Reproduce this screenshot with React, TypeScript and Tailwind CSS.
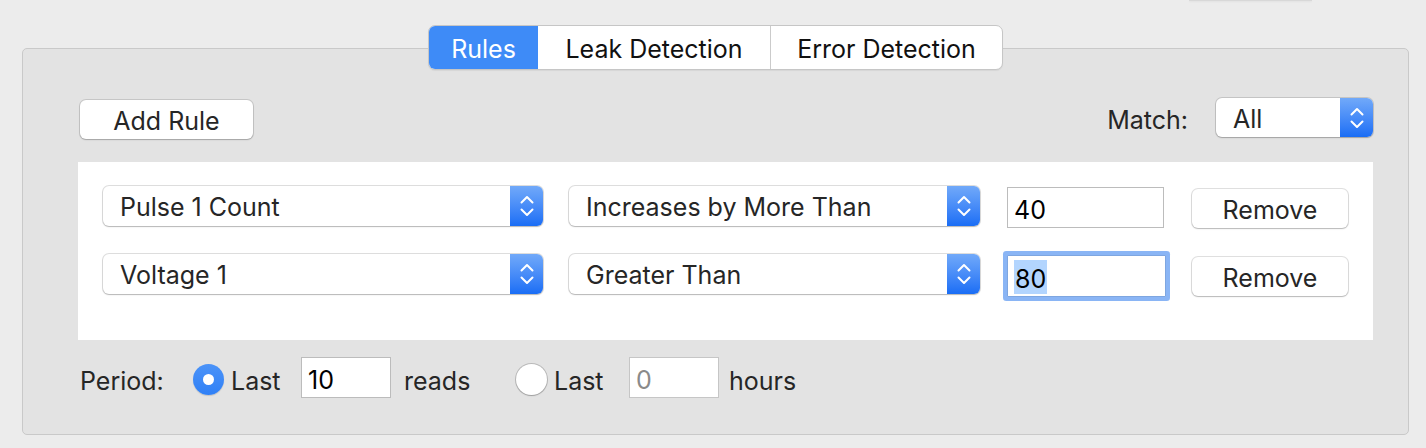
import React from "react";

function Chevrons() {
  return (
    <svg width="14" height="22" viewBox="0 0 14 22" fill="none">
      <path d="M1.5 7.5 L7 2 L12.5 7.5" stroke="white" strokeWidth="2" strokeLinecap="round" strokeLinejoin="round" />
      <path d="M1.5 14.5 L7 20 L12.5 14.5" stroke="white" strokeWidth="2" strokeLinecap="round" strokeLinejoin="round" />
    </svg>
  );
}

function Select({ label, className }: { label: string; className: string }) {
  return (
    <div
      className={
        "flex rounded-[6px] bg-white overflow-hidden shadow-[0_0_0_1px_rgba(0,0,0,0.13),0_1px_1.5px_rgba(0,0,0,0.18)] " +
        className
      }
    >
      <div className="flex-1 flex items-center pl-[17px] pt-[3px] text-[25px] text-[#262626] leading-none">{label}</div>
      <div className="w-[33px] flex items-center justify-center bg-gradient-to-b from-[#71a9f9] to-[#196df5]">
        <Chevrons />
      </div>
    </div>
  );
}

function Button({ label, className }: { label: string; className: string }) {
  return (
    <div
      className={
        "flex items-center justify-center pt-[4px] rounded-[6px] bg-white text-[25px] text-[#262626] leading-none shadow-[0_0_0_1px_rgba(0,0,0,0.12),0_1px_1.5px_rgba(0,0,0,0.18)] " +
        className
      }
    >
      {label}
    </div>
  );
}

export default function App() {
  return (
    <div className="w-[1426px] h-[448px] bg-[#ececec] overflow-hidden font-['Inter',sans-serif]">
      <div className="ml-[1189px] w-[123px] h-px bg-[#d8d8d8] shadow-[0_1px_2px_rgba(0,0,0,0.06)]" />
      <div className="ml-[22px] mt-[47px] w-[1387px] h-[387px] rounded-[5px] border border-[#c9c9c9] bg-[#e3e3e3] flex flex-col">
        {/* Tabs */}
        <div className="-mt-[24px] flex justify-center">
          <div className="flex h-[45px] rounded-[7px] border border-[#c6c6c6] bg-white overflow-hidden shadow-[0_1px_1px_rgba(0,0,0,0.06)] text-[25px] leading-none">
            <div className="w-[109px] flex items-center justify-center pt-[4px] bg-[#3e8bf7] text-white">Rules</div>
            <div className="w-[232px] flex items-center justify-center pt-[4px] text-[#111]">Leak Detection</div>
            <div className="w-[232px] flex items-center justify-center pt-[4px] border-l border-[#cbcbcb] text-[#111]">
              Error Detection
            </div>
          </div>
        </div>

        {/* Add rule / match row */}
        <div className="mt-[28px] h-[41px] flex items-start justify-between pl-[57px] pr-[35px]">
          <Button label="Add Rule" className="mt-[2px] w-[173px] h-[39px]" />
          <div className="flex items-center h-[39px]">
            <span className="text-[25px] text-[#262626] leading-none mr-[28px] pt-[5px]">Match:</span>
            <Select label="All" className="w-[157px] h-[39px]" />
          </div>
        </div>

        {/* Rules box */}
        <div className="mt-[23px] ml-[55px] mr-[35px] h-[178px] bg-white pt-[24px] pl-[25px] flex flex-col gap-[26px]">
          <div className="flex items-start h-[42px]">
            <Select label="Pulse 1 Count" className="w-[440px] h-[40px]" />
            <Select label="Increases by More Than" className="ml-[26px] w-[411px] h-[40px]" />
            <div className="ml-[27px] mt-[1px] w-[157px] h-[41px] border border-[#bcbcbc] bg-white flex items-center pl-[6px] pt-[5px] text-[25px] text-black leading-none">
              40
            </div>
            <Button label="Remove" className="ml-[28px] mt-[3px] w-[156px] h-[39px]" />
          </div>
          <div className="flex items-start h-[42px]">
            <Select label="Voltage 1" className="w-[440px] h-[40px]" />
            <Select label="Greater Than" className="ml-[26px] w-[411px] h-[40px]" />
            <div className="ml-[27px] mt-[1px] w-[159px] h-[42px] border border-[#7ea6e0] bg-white rounded-[1px] shadow-[0_0_0_4px_#8ab5f5] flex items-center pl-[6px] pt-[2px] text-[25px] text-black leading-none">
              <span className="bg-[#b3d5fe] h-[34px] flex items-center pt-[4px] px-px">80</span>
            </div>
            <Button label="Remove" className="ml-[26px] mt-[3px] w-[156px] h-[39px]" />
          </div>
        </div>

        {/* Period row */}
        <div className="mt-[17px] h-[41px] pl-[57px] flex items-center text-[25px] text-[#262626] leading-none">
          <span className="w-[113px] pt-[8px]">Period:</span>
          <div className="mt-[3px] w-[31px] h-[31px] rounded-full bg-gradient-to-b from-[#4b93f8] to-[#2f80f6] flex items-center justify-center shadow-[0_1px_1px_rgba(0,0,0,0.15)]">
            <div className="w-[11px] h-[11px] rounded-full bg-white" />
          </div>
          <span className="ml-[7px] w-[70px] pt-[8px]">Last</span>
          <div className="w-[90px] h-[41px] border border-[#bcbcbc] bg-white flex items-center pl-[6px] pt-[5px] text-black">10</div>
          <span className="ml-[13px] w-[112px] pt-[8px]">reads</span>
          <div className="mt-[3px] w-[31px] h-[31px] rounded-full bg-white shadow-[0_0_0_1px_rgba(0,0,0,0.18),0_1px_1.5px_rgba(0,0,0,0.15)]" />
          <span className="ml-[7px] w-[75px] pt-[8px]">Last</span>
          <div className="w-[90px] h-[41px] border border-[#c6c6c6] bg-white flex items-center pl-[6px] pt-[5px] text-[#8a8a8a]">0</div>
          <span className="ml-[10px] pt-[8px]">hours</span>
        </div>
      </div>
    </div>
  );
}
